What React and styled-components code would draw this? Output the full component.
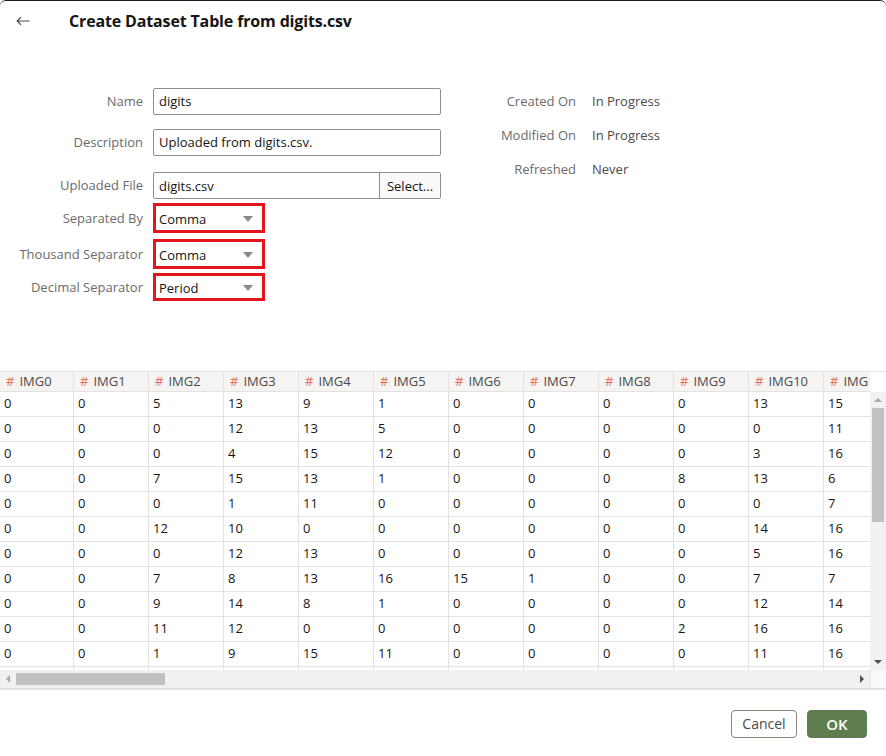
import React from 'react';
import styled, { createGlobalStyle } from 'styled-components';

const Global = createGlobalStyle`
  html, body { margin: 0; padding: 0; background: #fff; }
  body { font-family: "Open Sans", "Noto Sans", sans-serif; color: #161513; }
  * { box-sizing: border-box; }
`;

const Dialog = styled.div`
  width: 886px;
  height: 756px;
  border-top: 1px solid #1c1c1c;
  border-radius: 6px 6px 0 0;
  display: flex;
  flex-direction: column;
  overflow: hidden;
  background: #fff;
`;

const Header = styled.div`
  height: 39px;
  display: flex;
  align-items: center;
  padding-left: 16px;
  gap: 39px;
`;

const BackIcon = styled.svg`
  width: 14px;
  height: 10px;
  display: block;
`;

const Title = styled.h1`
  margin: 0;
  font-size: 16px;
  font-weight: 700;
  color: #161513;
  letter-spacing: -0.15px;
`;

const FormArea = styled.div`
  height: 331px;
  padding-top: 48px;
  display: flex;
  gap: 35px;
`;

const LeftCol = styled.div`
  display: flex;
  flex-direction: column;
`;

const FieldRow = styled.div`
  display: grid;
  grid-template-columns: 143px 288px;
  column-gap: 10px;
  align-items: center;
  height: ${(p) => p.$h}px;
  margin-bottom: ${(p) => p.$mb || 0}px;
`;

const Label = styled.label`
  text-align: right;
  font-size: 13px;
  line-height: 16px;
  padding-bottom: 1px;
  color: #6b6b6b;
  white-space: nowrap;
`;

const TextInput = styled.div`
  height: 27px;
  border: 1px solid #8e8e8e;
  border-radius: 2px;
  display: flex;
  align-items: center;
  padding: 0 0 1px 5px;
  font-size: 13px;
  color: #161513;
`;

const FileInput = styled.div`
  height: 27px;
  border: 1px solid #8e8e8e;
  border-radius: 2px;
  display: flex;
  align-items: stretch;
  font-size: 13px;
`;

const FileName = styled.div`
  flex: 1;
  display: flex;
  align-items: center;
  padding-left: 5px;
`;

const SelectBtn = styled.div`
  width: 61px;
  border-left: 1px solid #8e8e8e;
  background: #f9f9f9;
  display: flex;
  align-items: center;
  justify-content: center;
  color: #161513;
`;

const SelectBox = styled.div`
  width: 112px;
  height: ${(p) => p.$h}px;
  border: 3px solid #e3141c;
  display: flex;
  align-items: center;
  justify-content: space-between;
  padding: 2px 9px 0 3px;
  font-size: 13px;
  color: #161513;
  background: #fff;
`;

const Caret = styled.span`
  width: 0;
  height: 0;
  border-left: 5px solid transparent;
  border-right: 5px solid transparent;
  border-top: 6px solid #8a8a8a;
`;

const RightCol = styled.div`
  display: flex;
  flex-direction: column;
  gap: 7px;
`;

const InfoRow = styled.div`
  display: grid;
  grid-template-columns: 100px auto;
  column-gap: 16px;
  height: 27px;
  align-items: center;
  font-size: 13px;
  padding-bottom: 2px;
`;

const InfoLabel = styled.span`
  text-align: right;
  color: #6b6b6b;
  white-space: nowrap;
`;

const InfoValue = styled.span`
  color: #4a4a4a;
`;

const TableArea = styled.div`
  display: grid;
  grid-template-columns: 870px 16px;
  grid-template-rows: 20px 278px 18px;
  border-top: 1px solid #e2e2e2;
  border-bottom: 2px solid #e2e2e2;
  overflow: hidden;
`;

const HeaderRow = styled.div`
  display: grid;
  grid-template-columns: 74px repeat(11, 75px);
  background: #f5f4f2;
  border-bottom: 1px solid #e2e2e2;
  overflow: hidden;
`;

const HeadCell = styled.div`
  border-right: 1px solid #e2e2e2;
  font-size: 13px;
  color: #4a4a4a;
  display: flex;
  align-items: center;
  padding: 0 0 1px 6px;
  gap: 5px;
  white-space: nowrap;
  overflow: hidden;
`;

const Hash = styled.span`
  color: #e5705c;
`;

const Body = styled.div`
  overflow: hidden;
`;

const Row = styled.div`
  display: grid;
  grid-template-columns: 74px repeat(11, 75px);
  height: 25px;
  border-bottom: 1px solid #e2e2e2;
`;

const Cell = styled.div`
  border-right: 1px solid #e2e2e2;
  font-size: 13px;
  color: #161513;
  display: flex;
  align-items: center;
  padding: 0 0 2px 4px;
`;

const Blank = styled.div`
  background: #fff;
`;

const VScroll = styled.div`
  background: #f1f1f1;
  display: flex;
  flex-direction: column;
  align-items: center;
`;

const HScroll = styled.div`
  background: #f1f1f1;
  display: flex;
  align-items: center;
`;

const ArrowBox = styled.div`
  width: 16px;
  height: 16px;
  flex: none;
  display: flex;
  align-items: center;
  justify-content: center;
`;

const Tri = styled.span`
  width: 0;
  height: 0;
  ${(p) =>
    p.$dir === 'up'
      ? `border-left:4px solid transparent;border-right:4px solid transparent;border-bottom:4px solid ${p.$c};`
      : p.$dir === 'down'
      ? `border-left:4px solid transparent;border-right:4px solid transparent;border-top:4px solid ${p.$c};`
      : p.$dir === 'left'
      ? `border-top:4px solid transparent;border-bottom:4px solid transparent;border-right:4px solid ${p.$c};`
      : `border-top:4px solid transparent;border-bottom:4px solid transparent;border-left:4px solid ${p.$c};`}
`;

const VThumb = styled.div`
  width: 12px;
  height: 114px;
  background: #c1c1c1;
  flex: none;
`;

const HThumb = styled.div`
  width: 149px;
  height: 12px;
  background: #c1c1c1;
  flex: none;
`;

const Spacer = styled.div`
  flex: 1;
`;

const Corner = styled.div`
  background: #f9f9f9;
  border-left: 1px solid #e6e6e6;
`;

const Footer = styled.div`
  display: flex;
  justify-content: flex-end;
  gap: 10px;
  padding: 20px 19px 0 0;
`;

const Button = styled.button`
  height: 28px;
  width: ${(p) => p.$w}px;
  border-radius: 4px;
  font-family: inherit;
  font-size: ${(p) => (p.$primary ? 15 : 14)}px;
  font-weight: ${(p) => (p.$primary ? 600 : 400)};
  border: 1px solid ${(p) => (p.$primary ? '#5e7e4f' : '#8b8680')};
  background: ${(p) => (p.$primary ? '#5e7e4f' : '#fff')};
  color: ${(p) => (p.$primary ? '#fff' : '#4a4a4a')};
  padding: 0 0 1px;
  cursor: pointer;
`;

const data = [
  [0, 0, 5, 13, 9, 1, 0, 0, 0, 0, 13, 15],
  [0, 0, 0, 12, 13, 5, 0, 0, 0, 0, 0, 11],
  [0, 0, 0, 4, 15, 12, 0, 0, 0, 0, 3, 16],
  [0, 0, 7, 15, 13, 1, 0, 0, 0, 8, 13, 6],
  [0, 0, 0, 1, 11, 0, 0, 0, 0, 0, 0, 7],
  [0, 0, 12, 10, 0, 0, 0, 0, 0, 0, 14, 16],
  [0, 0, 0, 12, 13, 0, 0, 0, 0, 0, 5, 16],
  [0, 0, 7, 8, 13, 16, 15, 1, 0, 0, 7, 7],
  [0, 0, 9, 14, 8, 1, 0, 0, 0, 0, 12, 14],
  [0, 0, 11, 12, 0, 0, 0, 0, 0, 2, 16, 16],
  [0, 0, 1, 9, 15, 11, 0, 0, 0, 0, 11, 16],
  [null, null, null, null, null, null, null, null, null, null, null, null],
];

const headers = Array.from({ length: 12 }, (_, i) => `IMG${i}`);

export default function App() {
  return (
    <>
      <Global />
      <Dialog>
        <Header>
          <BackIcon viewBox="0 0 14 10">
            <path d="M13.5 5H1.2M5 1.2L1.2 5 5 8.8" fill="none" stroke="#4a4a4a" strokeWidth="1.2" />
          </BackIcon>
          <Title>Create Dataset Table from digits.csv</Title>
        </Header>

        <FormArea>
          <LeftCol>
            <FieldRow $h={27} $mb={14}>
              <Label>Name</Label>
              <TextInput>digits</TextInput>
            </FieldRow>
            <FieldRow $h={27} $mb={16}>
              <Label>Description</Label>
              <TextInput>Uploaded from digits.csv.</TextInput>
            </FieldRow>
            <FieldRow $h={27} $mb={4}>
              <Label>Uploaded File</Label>
              <FileInput>
                <FileName>digits.csv</FileName>
                <SelectBtn>Select...</SelectBtn>
              </FileInput>
            </FieldRow>
            <FieldRow $h={30} $mb={6}>
              <Label>Separated By</Label>
              <SelectBox $h={30}>Comma<Caret /></SelectBox>
            </FieldRow>
            <FieldRow $h={30} $mb={4}>
              <Label>Thousand Separator</Label>
              <SelectBox $h={30}>Comma<Caret /></SelectBox>
            </FieldRow>
            <FieldRow $h={28}>
              <Label>Decimal Separator</Label>
              <SelectBox $h={28}>Period<Caret /></SelectBox>
            </FieldRow>
          </LeftCol>
          <RightCol>
            <InfoRow>
              <InfoLabel>Created On</InfoLabel>
              <InfoValue>In Progress</InfoValue>
            </InfoRow>
            <InfoRow>
              <InfoLabel>Modified On</InfoLabel>
              <InfoValue>In Progress</InfoValue>
            </InfoRow>
            <InfoRow>
              <InfoLabel>Refreshed</InfoLabel>
              <InfoValue>Never</InfoValue>
            </InfoRow>
          </RightCol>
        </FormArea>

        <TableArea>
          <HeaderRow>
            {headers.map((h) => (
              <HeadCell key={h}>
                <Hash>#</Hash>
                {h}
              </HeadCell>
            ))}
          </HeaderRow>
          <Blank />
          <Body>
            {data.map((r, i) => (
              <Row key={i}>
                {r.map((v, j) => (
                  <Cell key={j}>{v}</Cell>
                ))}
              </Row>
            ))}
          </Body>
          <VScroll>
            <ArrowBox><Tri $dir="up" $c="#a8a8a8" /></ArrowBox>
            <VThumb />
            <Spacer />
            <ArrowBox><Tri $dir="down" $c="#505050" /></ArrowBox>
          </VScroll>
          <HScroll>
            <ArrowBox><Tri $dir="left" $c="#a8a8a8" /></ArrowBox>
            <HThumb />
            <Spacer />
            <ArrowBox><Tri $dir="right" $c="#505050" /></ArrowBox>
          </HScroll>
          <Corner />
        </TableArea>

        <Footer>
          <Button $w={66}>Cancel</Button>
          <Button $w={60} $primary>OK</Button>
        </Footer>
      </Dialog>
    </>
  );
}
